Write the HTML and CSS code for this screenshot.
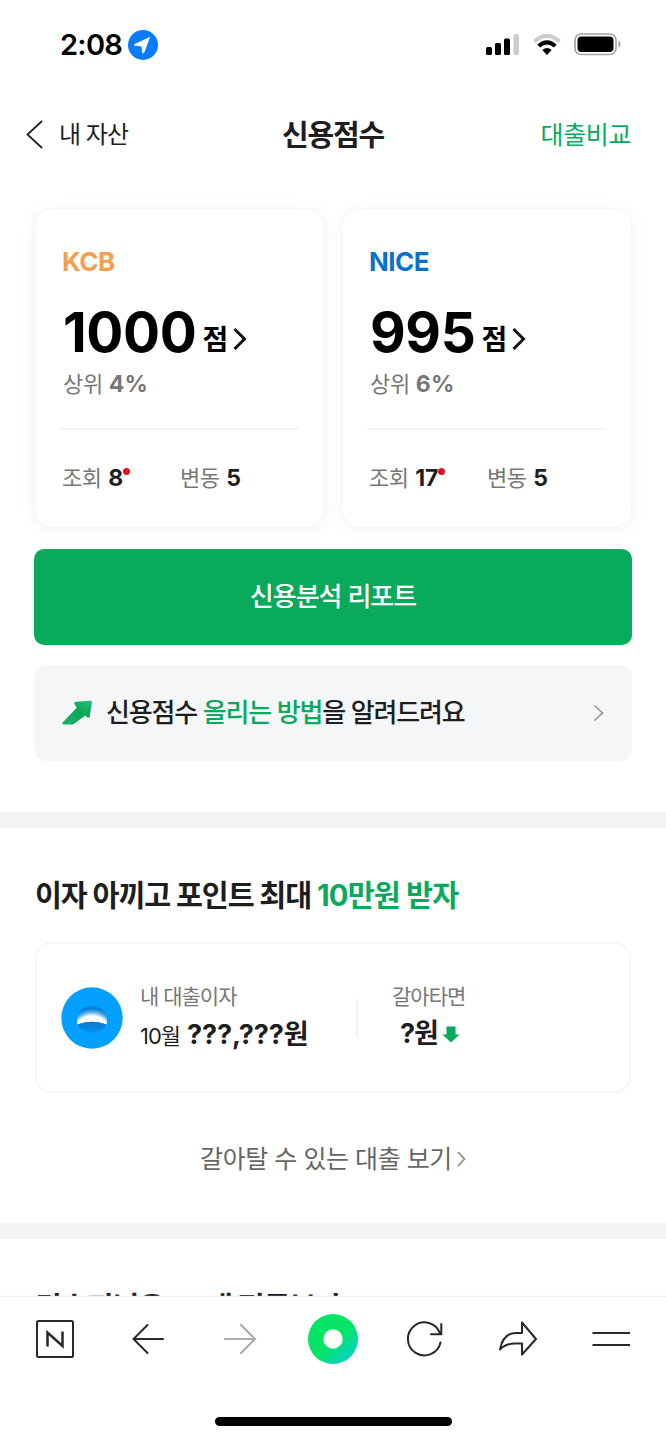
FILE: index.html
```html
<!DOCTYPE html>
<html lang="ko">
<head>
<meta charset="utf-8">
<title>신용점수</title>
<link rel="stylesheet" href="styles.css">
</head>
<body>
<div class="screen">
  <main class="page">
    <div class="status">
      <span class="time">2:08</span>
      <svg class="location" width="30" height="30" viewBox="0 0 30 30"><circle cx="15" cy="15" r="15" fill="#0a7cff"/><path d="M21.5 7.5 6.700 14.400q-.5.6.2 1l7 .6.7 6.600q.5.9 1.200.1Z" fill="#fff" stroke="#fff" stroke-width=".8" stroke-linejoin="round"/></svg>
      <svg class="signal" width="34" height="22" viewBox="0 0 34 22"><rect x="0" y="13" width="6" height="8" rx="1.6"/><rect x="9" y="9" width="6" height="12" rx="1.6"/><rect x="18" y="4.500" width="6" height="16.500" rx="1.6"/><rect x="27.500" y="0" width="5.500" height="21" rx="1.6" fill="#ccc"/></svg>
      <svg class="wifi" width="28" height="22" viewBox="0 0 28 22" fill="none"><path d="M1.500 7.500Q14-3.500 26.500 7.500" stroke="#ccc" stroke-width="4"/><path d="M5.700 12Q14 4.600 22.300 12" stroke="#000" stroke-width="4"/><path d="M9.300 15.900Q14 12 18.700 15.900L14 21Z" fill="#000"/></svg>
      <svg class="battery" width="47" height="23" viewBox="0 0 47 23"><rect x="1" y="1" width="41" height="20.500" rx="6" fill="none" stroke="#a3a3a3" stroke-width="1.700"/><rect x="3.500" y="3.500" width="36" height="15.500" rx="4"/><path d="M44.500 8v6.500q2-1 2-3.250T44.500 8Z" fill="#999"/></svg>
    </div>

    <header class="nav">
      <a class="back"><svg width="17" height="29" viewBox="0 0 17 29"><path d="M16 1 1.500 14.500 16 28" fill="none" stroke="#222" stroke-width="1.800"/></svg><span>내 자산</span></a>
      <h1 class="title">신용점수</h1>
      <a class="compare">대출비교</a>
    </header>

    <section class="scores">
      <div class="cards">
        <article class="card">
          <h2 class="bureau kcb">KCB</h2>
          <div class="score"><b>1000</b><span>점</span><svg width="14" height="24" viewBox="0 0 14 24"><path d="m1.500 2 10 10-10 10" fill="none" stroke="#111" stroke-width="3"/></svg></div>
          <div class="rank">상위 <b>4%</b></div>
          <div class="counts"><div class="count">조회 <b>8</b><i class="dot"></i></div><div class="count">변동 <b>5</b></div></div>
        </article>
        <article class="card">
          <h2 class="bureau nice">NICE</h2>
          <div class="score"><b>995</b><span>점</span><svg width="14" height="24" viewBox="0 0 14 24"><path d="m1.500 2 10 10-10 10" fill="none" stroke="#111" stroke-width="3"/></svg></div>
          <div class="rank">상위 <b>6%</b></div>
          <div class="counts"><div class="count">조회 <b>17</b><i class="dot"></i></div><div class="count">변동 <b>5</b></div></div>
        </article>
      </div>
      <a class="report">신용분석 리포트</a>
      <a class="tip">
        <svg width="31" height="26" viewBox="0 0 31 26"><defs><linearGradient id="up" x1="0" y1="1" x2="1" y2="0"><stop offset="0" stop-color="#22b06a"/><stop offset=".55" stop-color="#0aa757"/><stop offset="1" stop-color="#2bc07a"/></linearGradient></defs><path d="M28.500.8Q30.200.8 29.900 2.300L27.700 16.800Q27.100 18.500 25.700 17.500L23.300 15.500 12.500 23.500Q11.300 24.400 9.800 24.400H1.500Q-.5 24.400.8 22.300L14.800 7.800 12.500 4Q11.700 2.200 13.700 1.800Z" fill="url(#up)"/><path d="M23.300 15.500 25.700 17.500Q27.100 18.500 27.700 16.800L29.900 2Z" fill="#0a8d49" opacity=".2"/></svg>
        <span class="tip-text">신용점수 <em>올리는 방법</em>을 알려드려요</span>
        <svg class="tip-go" width="11" height="18" viewBox="0 0 11 18"><path d="m1.500 1.500 8 7.500-8 7.500" fill="none" stroke="#999" stroke-width="1.700"/></svg>
      </a>
    </section>

    <section class="loan">
      <h2 class="heading">이자 아끼고 포인트 최대 <em>10만원 받자</em></h2>
      <div class="loan-card">
        <svg class="bank" width="62" height="62" viewBox="0 0 62 62"><defs><radialGradient id="dome" gradientUnits="userSpaceOnUse" cx="31" cy="47" r="30"><stop offset=".6" stop-color="#fff"/><stop offset=".74" stop-color="#4fa8e8"/><stop offset=".84" stop-color="#0c7fd8"/><stop offset="1" stop-color="#048be6"/></radialGradient><linearGradient id="base" x1="0" y1="0" x2="0" y2="1"><stop offset="0" stop-color="#0877ce"/><stop offset="1" stop-color="#0790ec"/></linearGradient></defs><circle cx="31" cy="31" r="30.700" fill="#04a0ff"/><path d="M16.500 37.500A15 15 0 1 1 45.500 37.500Q31 32 16.500 37.500Z" fill="url(#dome)"/><path d="M16.500 37.500Q31 32 45.500 37.500C40.500 48.500 21.500 48.500 16.500 37.500Z" fill="url(#base)"/></svg>
        <div class="interest"><div class="label">내 대출이자</div><div class="amount"><small>10월</small><b><span class="marks">???,???</span>원</b></div></div>
        <div class="switch"><div class="label">갈아타면</div><div class="amount"><b>?원</b><svg width="18" height="17" viewBox="0 0 18 17"><path d="M4.500.5h9v8h4.200L9 16.600.3 8.500h4.200Z" fill="#09aa5c"/></svg></div></div>
      </div>
      <a class="more"><span>갈아탈 수 있는 대출 보기</span><svg width="9" height="16" viewBox="0 0 9 16"><path d="m1 1 6.500 7L1 15" fill="none" stroke="#888" stroke-width="1.600"/></svg></a>
    </section>

    <section class="average"><h2 class="heading">김수지님은 20대 평균보다</h2></section>
  </main>

  <footer class="toolbar">
    <div class="tools">
      <svg width="40" height="52" viewBox="0 0 40 52" fill="none" stroke="#262829" stroke-width="2"><rect x="2" y="8" width="36" height="36" rx="1.500"/><path d="M12.500 33.500V19.500L27.500 33V18.500" stroke-width="2.500"/></svg>
      <svg width="40" height="52" viewBox="0 0 40 52" fill="none" stroke="#262829" stroke-width="2" stroke-linecap="round"><path d="M35 26H5.500M19.500 12l-14 14 14 14"/></svg>
      <svg width="40" height="52" viewBox="0 0 40 52" fill="none" stroke="#aaa" stroke-width="2" stroke-linecap="round"><path d="M5 26h29.500M21 12l14 14-14 14"/></svg>
      <svg width="52" height="52" viewBox="0 0 52 52"><defs><linearGradient id="dotfill" x1=".2" y1=".1" x2=".9" y2=".9"><stop offset=".5" stop-color="#07e566"/><stop offset="1" stop-color="#05d1cf"/></linearGradient></defs><circle cx="26" cy="26" r="25" fill="url(#dotfill)"/><circle cx="26" cy="26" r="9.700" fill="#fff"/></svg>
      <svg width="40" height="52" viewBox="0 0 40 52" fill="none" stroke="#262829" stroke-width="2" stroke-linecap="round"><path d="M34.500 29.500A16.500 16.500 0 1 1 34 20.500M35.300 11v10.300H25"/></svg>
      <svg width="40" height="52" viewBox="0 0 40 52" fill="none" stroke="#262829" stroke-width="2" stroke-linejoin="round"><path d="M24 9.500 38 26 24 41.500V30.500H17Q7.500 30.500 2 36.500 5 20 18 20h6Z"/></svg>
      <svg width="40" height="52" viewBox="0 0 40 52" stroke="#262829" stroke-width="2"><path d="M1.500 20h37.500M1.500 32h37.500"/></svg>
    </div>
    <div class="home"></div>
  </footer>
</div>
</body>
</html>
```
FILE: styles.css
```css
* { box-sizing: border-box; }
body {
  margin: 0;
  background: #fff;
  color: #1e1e20;
  font-family: Inter, "Noto Sans CJK KR", sans-serif;
}
h1, h2 { margin: 0; font-weight: 700; }
em { font-style: normal; color: #09aa5c; }
svg { display: block; flex: none; }
.screen { display: flex; flex-direction: column; width: 666px; height: 1440px; overflow: hidden; }
.page { height: 1297px; overflow: hidden; flex: none; }

.status { display: flex; align-items: center; height: 89px; padding: 0 45px 0 60px; color: #000; }
.time { width: 68px; font-size: 29px; font-weight: 600; letter-spacing: -.7px; line-height: 40px; }
.signal { margin-left: auto; }
.wifi { margin-left: 13px; }
.battery { margin-left: 13px; }

.nav { display: grid; grid-template-columns: 1fr auto 1fr; align-items: center; height: 91px; padding: 0 35px; white-space: nowrap; }
.back { display: flex; align-items: center; gap: 16px; margin-left: -9px; font-size: 24px; letter-spacing: -1px; }
.back span { padding-bottom: 4px; }
.title { padding-bottom: 4px; font-size: 29px; letter-spacing: -1.2px; }
.compare { justify-self: end; padding-bottom: 3px; font-size: 25px; letter-spacing: -.4px; color: #09aa5c; }

.scores { padding: 29px 35px 51px; border-bottom: 16px solid #f2f4f5; }
.cards { display: grid; grid-template-columns: 1fr 1fr; gap: 20px; }
.card { height: 318px; padding: 32px 24px 0 27px; border-radius: 16px; background: #fff; box-shadow: 0 0 2px rgba(0,0,0,.07), 0 2px 18px rgba(0,0,0,.05); white-space: nowrap; }
.card + .card { padding-left: 26px; padding-right: 25px; }
.bureau { font-size: 26px; line-height: 42px; letter-spacing: -.5px; }
.kcb { color: #f2a050; }
.nice { color: #0a72c8; }
.score { display: flex; align-items: baseline; height: 76px; line-height: 76px; padding: 11px 0 0 1px; color: #000; }
.score b { font-size: 55px; line-height: 76px; letter-spacing: -.4px; }
.score span { position: relative; top: -2px; margin-left: 6px; font-size: 28px; font-weight: 700; }
.score svg { position: relative; top: -1px; margin-left: 5px; }
.rank { margin-top: 9px; padding-left: 1px; font-size: 22px; line-height: 32px; letter-spacing: -.3px; color: #777; }
.rank b { font-size: 23px; letter-spacing: .2px; }
.counts { display: grid; grid-template-columns: 118px 1fr; margin: 28px 0 0 -2px; padding: 31px 0 0 2px; border-top: 2px solid #f4f4f4; font-size: 22px; line-height: 34px; letter-spacing: -.6px; color: #777; }
.count { display: flex; gap: 7px; }
.count b { font-size: 23px; letter-spacing: -.1px; color: #1e1e20; }
.dot { width: 7px; height: 7px; margin: 7px 0 0 -7px; border-radius: 50%; background: #e5101c; }
.report { display: flex; align-items: center; justify-content: center; height: 96px; margin: 22px -1px 0; padding-bottom: 5px; border-radius: 10px; background: #09aa5c; color: #fff; font-size: 26px; font-weight: 500; letter-spacing: -1px; }
.tip { display: flex; align-items: center; height: 96px; margin: 20px -1px 0; padding: 0 28px; border-radius: 12px; background: #f5f6f8; font-size: 26px; font-weight: 500; letter-spacing: -1.17px; white-space: nowrap; }
.tip-text { margin-left: 13px; padding-bottom: 6px; }
.tip-go { margin-left: auto; }

.loan { height: 411px; padding: 43px 35px 0; border-bottom: 16px solid #f2f4f5; }
.heading { font-size: 29.3px; line-height: 50px; letter-spacing: -1.1px; white-space: nowrap; }
.loan .heading em { letter-spacing: -.8px; }
.loan-card { display: flex; align-items: center; height: 151px; margin-top: 21px; padding: 0 24px; border: 2px solid #f6f6f6; border-radius: 16px; white-space: nowrap; }
.interest { position: relative; width: 235px; padding-left: 17px; }
.interest::after { content: ""; position: absolute; right: 0; top: 18px; width: 2px; height: 38px; background: #f2f2f2; }
.switch { padding-left: 34px; }
.label { font-size: 21px; line-height: 32px; letter-spacing: -1px; color: #777; }
.amount { display: flex; align-items: baseline; height: 42px; padding-top: 1px; line-height: 42px; }
.amount small { margin-right: 7px; font-size: 22px; letter-spacing: -1px; }
.amount b { font-size: 27px; letter-spacing: -1px; }
.marks { letter-spacing: -.1px; }
.switch .amount { align-items: center; gap: 4px; padding-left: 8px; }
.more { display: flex; align-items: center; justify-content: center; gap: 5px; margin-top: 45px; font-size: 25px; line-height: 42px; letter-spacing: -.45px; color: #666; white-space: nowrap; }
.average { padding: 43.500px 35px 0; }

.toolbar { flex: 1; background: #fff; box-shadow: 0 -1px 1px #ededed; }
.tools { display: grid; grid-template-columns: repeat(7, 1fr); align-items: center; justify-items: center; padding: 16px 9px 0; }
.home { width: 237px; height: 9px; margin: 52px auto 0; border-radius: 5px; background: #000; }
```
